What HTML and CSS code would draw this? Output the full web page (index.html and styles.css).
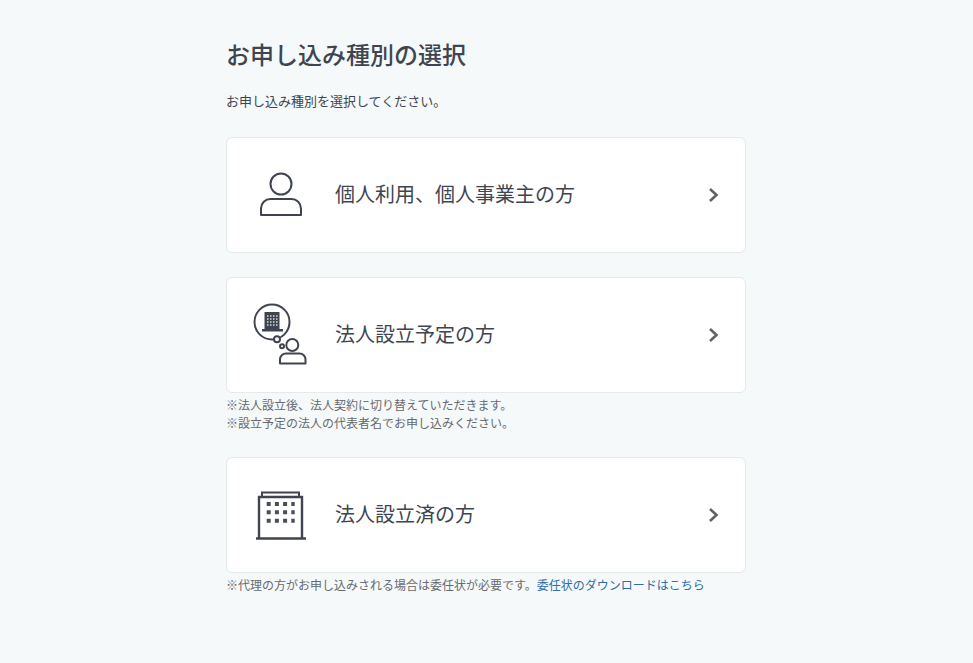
FILE: index.html
```html
<!DOCTYPE html>
<html lang="ja">
<head>
<meta charset="utf-8">
<title>お申し込み種別の選択</title>
<link rel="stylesheet" href="styles.css">
</head>
<body>
<main class="page">
  <h1 class="title">お申し込み種別の選択</h1>
  <p class="lead">お申し込み種別を選択してください。</p>

  <a class="card" href="#">
    <span class="card-icon">
      <svg width="60" height="60" viewBox="0 0 60 60" fill="none" stroke="#3f4450" stroke-width="2">
        <circle cx="29" cy="19" r="10.500"/>
        <path d="M9 50v-6.500a9.500 9.500 0 0 1 9.500-9.500h21a9.500 9.500 0 0 1 9.500 9.500v6.500z" stroke-linejoin="round"/>
      </svg>
    </span>
    <span class="card-label">個人利用、個人事業主の方</span>
    <svg class="chevron" width="12" height="16" viewBox="0 0 12 16" fill="none" stroke="#5f6368" stroke-width="2.600"><path d="M2 2l6.500 6-6.500 6"/></svg>
  </a>

  <a class="card card-gap" href="#">
    <span class="card-icon">
      <svg width="60" height="64" viewBox="0 0 60 64" fill="none" stroke="#3f4450" stroke-width="2">
        <circle cx="20" cy="19" r="17.500"/>
        <circle cx="25" cy="36.300" r="3" fill="#fff"/>
        <circle cx="30" cy="43.300" r="2"/>
        <circle cx="40.300" cy="42" r="6"/>
        <path d="M28 60.500v-4a6 6 0 0 1 6-6h13.500a6 6 0 0 1 6 6v4z" stroke-linejoin="round"/>
        <rect x="12.500" y="9" width="15" height="18" fill="#3f4450" stroke="none"/>
        <rect x="10" y="26" width="21" height="2.500" fill="#3f4450" stroke="none"/>
        <path d="M15 13h10.500M15 16h10.500M15 19h10.500M15 22h10.500" stroke="#d9dce0" stroke-width="1.300" stroke-dasharray="1.500 1.500"/>
      </svg>
    </span>
    <span class="card-label">法人設立予定の方</span>
    <svg class="chevron" width="12" height="16" viewBox="0 0 12 16" fill="none" stroke="#5f6368" stroke-width="2.600"><path d="M2 2l6.500 6-6.500 6"/></svg>
  </a>
  <p class="note">※法人設立後、法人契約に切り替えていただきます。<br>※設立予定の法人の代表者名でお申し込みください。</p>

  <a class="card card-gap-wide" href="#">
    <span class="card-icon">
      <svg width="60" height="60" viewBox="0 0 60 60" fill="none" stroke="#3f4450" stroke-width="2.400">
        <path d="M7 53.500V12h43v41.500"/>
        <path d="M10 12V7.500h37V12" stroke-width="2"/>
        <path d="M4 53.500h50"/>
        <path d="M14.700 19h28M14.700 27.300h28M14.700 35.700h28" stroke-width="4" stroke-dasharray="4 4.200" stroke="#4a4e58"/>
      </svg>
    </span>
    <span class="card-label">法人設立済の方</span>
    <svg class="chevron" width="12" height="16" viewBox="0 0 12 16" fill="none" stroke="#5f6368" stroke-width="2.600"><path d="M2 2l6.500 6-6.500 6"/></svg>
  </a>
  <p class="note">※代理の方がお申し込みされる場合は委任状が必要です。<a class="link" href="#">委任状のダウンロードはこちら</a></p>
</main>
</body>
</html>
```
FILE: styles.css
```css
* { box-sizing: border-box; }
html, body { margin: 0; height: 100%; }
body {
  padding-right: 1px;
  background: #f5f9fa;
  color: #3f4550;
  font-family: "Open Sans", "Noto Sans CJK JP", sans-serif;
}
.page {
  width: 520px;
  margin: 0 auto;
  padding-top: 37px;
}
.title {
  margin: 0;
  font-size: 24px;
  line-height: 36px;
  font-weight: 500;
}
.lead {
  margin: 19px 0 0;
  font-size: 13px;
  line-height: 18px;
}
.card {
  display: flex;
  align-items: center;
  height: 116px;
  margin-top: 27px;
  padding: 0 25px;
  background: #fff;
  border: 1px solid #e5e9eb;
  border-radius: 6px;
  color: inherit;
  text-decoration: none;
}
.card-gap { margin-top: 24px; }
.card-gap-wide { margin-top: 24px; }
.card-icon {
  display: flex;
  width: 60px;
  margin-right: 23px;
}
.card-label {
  flex: 1;
  font-size: 20px;
  line-height: 30px;
}
.chevron { flex: none; }
.note {
  margin: 4px 0 0;
  font-size: 12px;
  line-height: 18px;
  color: #666a70;
}
.link { color: #2f6ca8; text-decoration: none; }
```
